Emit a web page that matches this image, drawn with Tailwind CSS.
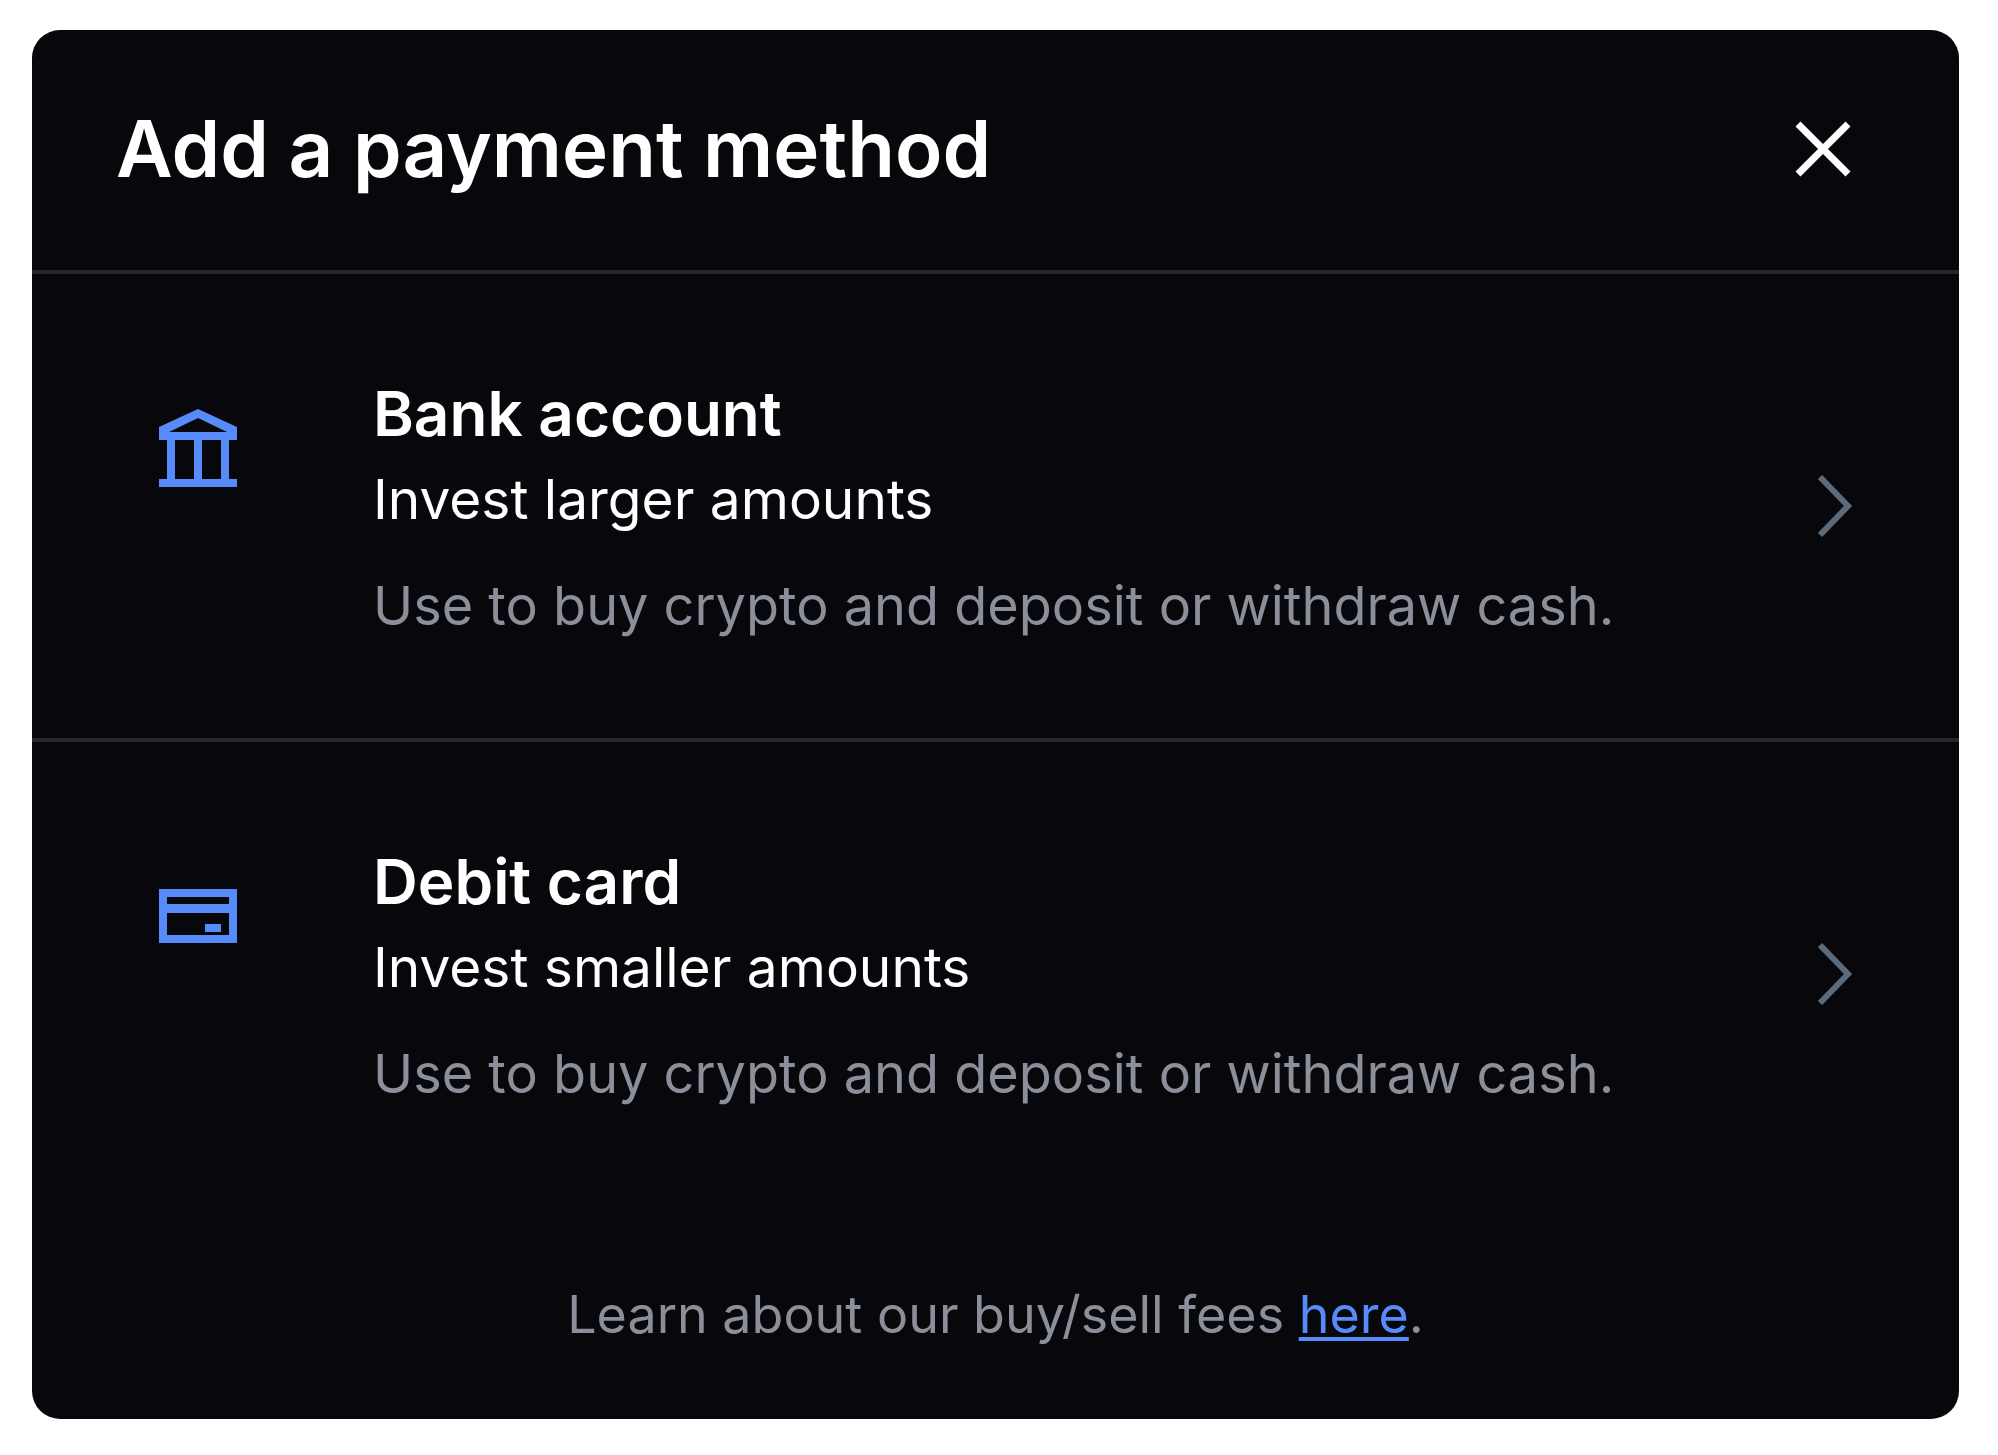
<!DOCTYPE html>
<html lang="en">
<head>
  <meta charset="UTF-8">
  <meta name="viewport" content="width=device-width, initial-scale=1.0">
  <script src="https://cdn.jsdelivr.net/npm/@tailwindcss/browser@4"></script>
  <title>Add a payment method</title>
</head>
<body class="bg-white pt-[30px] pb-9 pl-8 pr-[39px] font-['Inter','Liberation_Sans',sans-serif]">
  <main class="bg-[#08080c] text-white rounded-[28px] overflow-hidden">
    <header class="flex items-center justify-between h-60 pb-[2px] pl-[84px] pr-[108px]">
      <h1 class="text-[78px] leading-[96px] font-semibold">Add a payment method</h1>
      <button type="button" aria-label="Close">
        <svg class="w-[56px] h-[56px]" viewBox="0 0 56 56" fill="none" stroke="currentColor" stroke-width="7">
          <path d="M3 3l50 50M53 3L3 53"/>
        </svg>
      </button>
    </header>

    <button type="button" class="flex items-center w-full pl-[127px] pr-[106px] pt-24 pb-24 text-left border-t-4 border-[#25272a]">
      <svg class="w-[78px] h-[78px] self-start mt-[39px] shrink-0 text-[#578bfa]" viewBox="0 0 78 78" fill="currentColor">
        <path fill-rule="evenodd" d="M39 0l39 18v13h-8v39h8v8H0v-8h8V31H0V18zM39 9L10 23h58zM16 31v39h19V31zM43 31v39h19V31z"/>
      </svg>
      <span class="flex-1 ml-[136px]">
        <span class="block text-[62px] leading-[88px] font-semibold">Bank account</span>
        <span class="block text-[55px] leading-[82px]">Invest larger amounts</span>
        <span class="block text-[54px] leading-[72px] mt-[30px] text-[#8a8f9a]">Use to buy crypto and deposit or withdraw cash.</span>
      </span>
      <svg class="w-[36px] h-[64px] shrink-0 text-[#5b6b7b]" viewBox="0 0 36 64" fill="none" stroke="currentColor" stroke-width="6">
        <path d="M3 3l28 29L3 61"/>
      </svg>
    </button>

    <button type="button" class="flex items-center w-full pl-[127px] pr-[106px] pt-24 pb-24 text-left border-t-4 border-[#25272a]">
      <svg class="w-[78px] h-[78px] self-start mt-[39px] shrink-0 text-[#578bfa]" viewBox="0 0 78 78" fill="currentColor">
        <path fill-rule="evenodd" d="M0 12h78v54H0zM8 20v7h62v-7zM8 36v22h62V36zM46 47h16v8H46z"/>
      </svg>
      <span class="flex-1 ml-[136px]">
        <span class="block text-[62px] leading-[88px] font-semibold">Debit card</span>
        <span class="block text-[55px] leading-[82px]">Invest smaller amounts</span>
        <span class="block text-[54px] leading-[72px] mt-[30px] text-[#8a8f9a]">Use to buy crypto and deposit or withdraw cash.</span>
      </span>
      <svg class="w-[36px] h-[64px] shrink-0 text-[#5b6b7b]" viewBox="0 0 36 64" fill="none" stroke="currentColor" stroke-width="6">
        <path d="M3 3l28 29L3 61"/>
      </svg>
    </button>

    <p class="pt-[69px] pb-16 text-center text-[52px] leading-[80px] text-[#8a8f9a]">
      Learn about our buy/sell fees <a href="#" class="text-[#578bfa] underline decoration-4 underline-offset-4">here</a>.
    </p>
  </main>
</body>
</html>
